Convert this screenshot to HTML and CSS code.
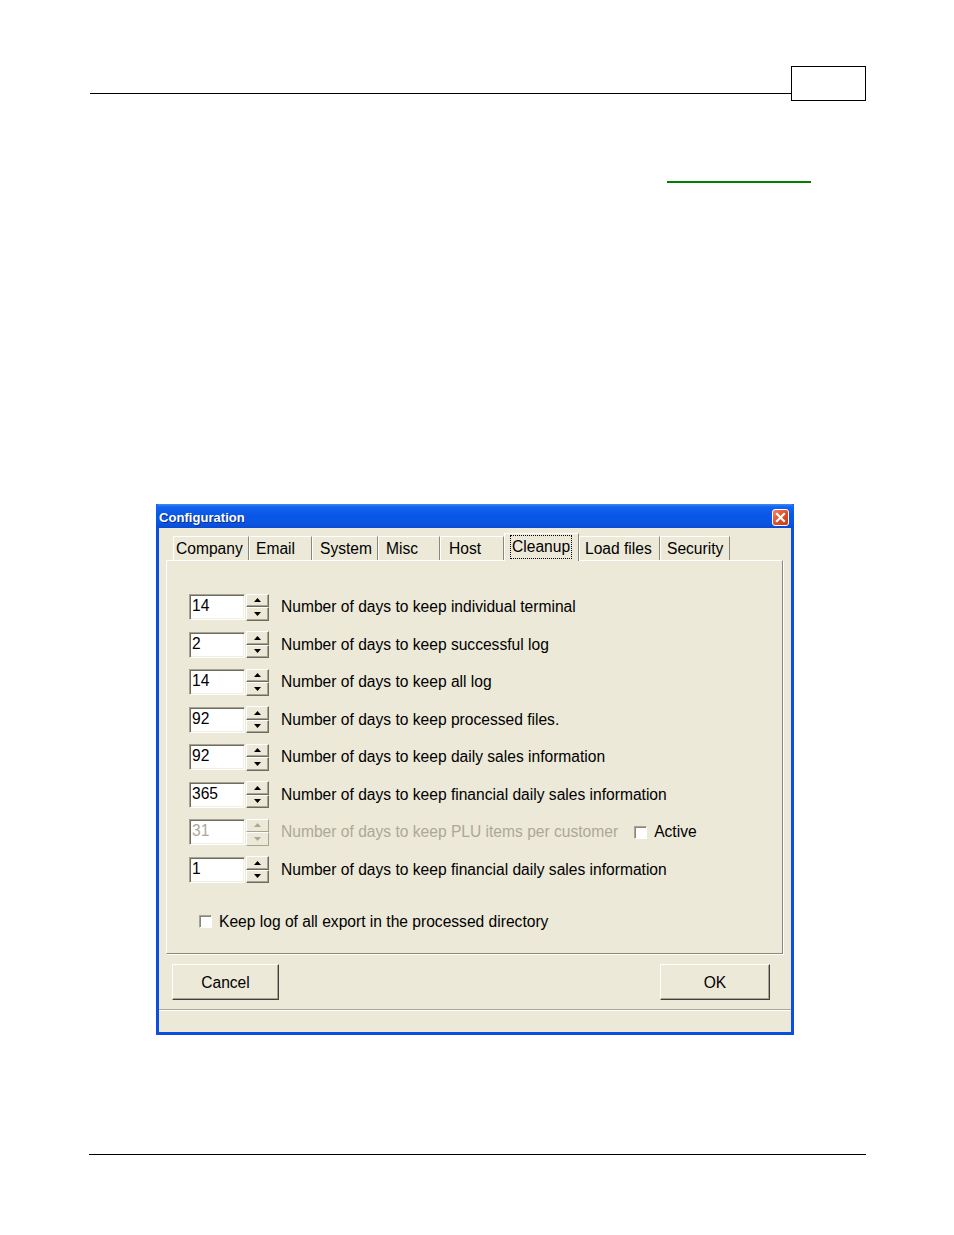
FILE: index.html
```html
<!DOCTYPE html>
<html>
<head>
<meta charset="utf-8">
<title>Configuration</title>
<link rel="stylesheet" href="styles.css">
</head>
<body>
<div class="page">
  <div class="header">
    <div class="header-line"></div>
    <div class="header-box"></div>
  </div>
  <div class="link-line"></div>

  <div class="dialog">
    <div class="titlebar">
      <span class="title">Configuration</span>
      <svg class="close" width="17" height="17" viewBox="0 0 17 17">
        <defs>
          <linearGradient id="cg" x1="0" y1="0" x2="1" y2="1">
            <stop offset="0" stop-color="#F08A6C"/>
            <stop offset="0.5" stop-color="#E0502C"/>
            <stop offset="1" stop-color="#C03A14"/>
          </linearGradient>
        </defs>
        <rect x="0.5" y="0.5" width="16" height="16" rx="2.5" fill="url(#cg)" stroke="#fff"/>
        <path d="M5 5 L12 12 M12 5 L5 12" stroke="#fff" stroke-width="2.2" stroke-linecap="square"/>
      </svg>
    </div>
    <div class="body">
      <div class="tabs">
        <div class="tab t-company">Company</div>
        <div class="tab t-email">Email</div>
        <div class="tab t-system">System</div>
        <div class="tab t-misc">Misc</div>
        <div class="tab t-host">Host</div>
        <div class="tab tab-active t-cleanup"><span class="focus">Cleanup</span></div>
        <div class="tab t-load">Load files</div>
        <div class="tab t-security">Security</div>
      </div>
      <div class="panel">
        <div class="rows">
          <div class="row">
            <div class="field">14</div>
            <div class="spin"><div class="spin-btn"><svg width="7" height="4" viewBox="0 0 7 4"><path d="M3.5 0 L7 4 L0 4 Z"/></svg></div><div class="spin-btn"><svg width="7" height="4" viewBox="0 0 7 4"><path d="M0 0 L7 0 L3.5 4 Z"/></svg></div></div>
            <span class="label">Number of days to keep individual terminal</span>
          </div>
          <div class="row">
            <div class="field">2</div>
            <div class="spin"><div class="spin-btn"><svg width="7" height="4" viewBox="0 0 7 4"><path d="M3.5 0 L7 4 L0 4 Z"/></svg></div><div class="spin-btn"><svg width="7" height="4" viewBox="0 0 7 4"><path d="M0 0 L7 0 L3.5 4 Z"/></svg></div></div>
            <span class="label">Number of days to keep successful log</span>
          </div>
          <div class="row">
            <div class="field">14</div>
            <div class="spin"><div class="spin-btn"><svg width="7" height="4" viewBox="0 0 7 4"><path d="M3.5 0 L7 4 L0 4 Z"/></svg></div><div class="spin-btn"><svg width="7" height="4" viewBox="0 0 7 4"><path d="M0 0 L7 0 L3.5 4 Z"/></svg></div></div>
            <span class="label">Number of days to keep all log</span>
          </div>
          <div class="row">
            <div class="field">92</div>
            <div class="spin"><div class="spin-btn"><svg width="7" height="4" viewBox="0 0 7 4"><path d="M3.5 0 L7 4 L0 4 Z"/></svg></div><div class="spin-btn"><svg width="7" height="4" viewBox="0 0 7 4"><path d="M0 0 L7 0 L3.5 4 Z"/></svg></div></div>
            <span class="label">Number of days to keep processed files.</span>
          </div>
          <div class="row">
            <div class="field">92</div>
            <div class="spin"><div class="spin-btn"><svg width="7" height="4" viewBox="0 0 7 4"><path d="M3.5 0 L7 4 L0 4 Z"/></svg></div><div class="spin-btn"><svg width="7" height="4" viewBox="0 0 7 4"><path d="M0 0 L7 0 L3.5 4 Z"/></svg></div></div>
            <span class="label">Number of days to keep daily sales information</span>
          </div>
          <div class="row">
            <div class="field">365</div>
            <div class="spin"><div class="spin-btn"><svg width="7" height="4" viewBox="0 0 7 4"><path d="M3.5 0 L7 4 L0 4 Z"/></svg></div><div class="spin-btn"><svg width="7" height="4" viewBox="0 0 7 4"><path d="M0 0 L7 0 L3.5 4 Z"/></svg></div></div>
            <span class="label">Number of days to keep financial daily sales information</span>
          </div>
          <div class="row row-disabled">
            <div class="field">31</div>
            <div class="spin"><div class="spin-btn"><svg width="7" height="4" viewBox="0 0 7 4"><path d="M3.5 0 L7 4 L0 4 Z"/></svg></div><div class="spin-btn"><svg width="7" height="4" viewBox="0 0 7 4"><path d="M0 0 L7 0 L3.5 4 Z"/></svg></div></div>
            <span class="label">Number of days to keep PLU items per customer</span>
            <span class="inline-check"><span class="check"></span><span class="check-label">Active</span></span>
          </div>
          <div class="row">
            <div class="field">1</div>
            <div class="spin"><div class="spin-btn"><svg width="7" height="4" viewBox="0 0 7 4"><path d="M3.5 0 L7 4 L0 4 Z"/></svg></div><div class="spin-btn"><svg width="7" height="4" viewBox="0 0 7 4"><path d="M0 0 L7 0 L3.5 4 Z"/></svg></div></div>
            <span class="label">Number of days to keep financial daily sales information</span>
          </div>
        </div>
        <div class="keep-log">
          <span class="check"></span><span class="check-label">Keep log of all export in the processed directory</span>
        </div>
      </div>
      <div class="footer">
        <div class="btn btn-cancel">Cancel</div>
        <div class="btn btn-ok">OK</div>
      </div>
      <div class="status"></div>
    </div>
  </div>

  <div class="footer-line"></div>
</div>
</body>
</html>
```
FILE: styles.css
```css
html, body {
  margin: 0;
  padding: 0;
  background: #fff;
}
body {
  font-family: "Liberation Sans", Arial, sans-serif;
  color: #000;
}
.page {
  width: 954px;
  padding-top: 66px;
}
.header {
  display: flex;
  margin-left: 90px;
  width: 776px;
}
.header-line {
  flex: 1;
  height: 27px;
  border-bottom: 1px solid #000;
}
.header-box {
  width: 75px;
  height: 35px;
  box-sizing: border-box;
  border: 1px solid #000;
}
.link-line {
  margin: 80px 0 0 667px;
  width: 144px;
  height: 2px;
  background: #008000;
}
.footer-line {
  margin: 119px 0 0 89px;
  width: 777px;
  height: 1px;
  background: #000;
}

/* dialog */
.dialog {
  margin: 321px 0 0 156px;
  width: 638px;
  box-sizing: border-box;
  background: #0B4FE0;
  padding: 0 3px 3px;
}
.titlebar {
  height: 24px;
  margin: 0 -3px;
  padding: 0 5px 0 3px;
  display: flex;
  align-items: center;
  justify-content: space-between;
  background: linear-gradient(to bottom, #3D8BF8 0%, #1563EE 12%, #0957E8 45%, #0A55E2 80%, #0A4AD2 100%);
  border-radius: 3px 3px 0 0;
}
.title {
  color: #fff;
  font-weight: bold;
  font-size: 13px;
  padding-top: 3px;
  letter-spacing: 0.05px;
  text-shadow: 1px 1px 0 #0A2E8C;
}
.close {
  display: block;
  margin-top: 2px;
}
.body {
  background: #ECE9D8;
  padding: 5px 8px 0 7px;
}

/* tabs */
.tabs {
  display: flex;
  align-items: flex-end;
  height: 27px;
  padding-left: 7px;
  position: relative;
  z-index: 1;
}
.tab {
  height: 24px;
  box-sizing: border-box;
  border-top: 1px solid #fff;
  border-left: 1px solid #fff;
  border-right: 1px solid #8A877A;
  padding-left: 6px;
  padding-top: 1px;
  font-size: 15.6px;
  line-height: 22px;
  white-space: nowrap;
  background: #ECE9D8;
}
.tab-active {
  height: 28px;
  margin-bottom: -1px;
  line-height: 24px;
  padding-top: 1px;
}
.focus {
  display: inline-block;
  outline: 1px dotted #000;
  outline-offset: 0;
  line-height: 22px;
  padding: 0 1px;
}
.t-company { width: 76px; padding-left: 2px; }
.t-email { width: 63px; padding-left: 6px; }
.t-system { width: 66px; padding-left: 7px; }
.t-misc { width: 62px; padding-left: 7px; }
.t-host { width: 64px; padding-left: 8px; }
.t-cleanup { width: 75px; padding-left: 6px; }
.t-load { width: 81px; padding-left: 5px; }
.t-security { width: 70px; padding-left: 6px; }

/* panel */
.panel {
  height: 394px;
  box-sizing: border-box;
  border-top: 1px solid #fff;
  border-left: 1px solid #fff;
  border-right: 1px solid #8A877A;
  border-bottom: 1px solid #8A877A;
  box-shadow: 1px 1px 0 #fff;
  padding: 33px 0 0 22px;
}
.rows {
  display: flex;
  flex-direction: column;
  gap: 11.5px;
}
.row {
  display: flex;
  align-items: center;
  height: 26px;
  font-size: 15.6px;
  line-height: 28px;
}
.field {
  width: 56px;
  height: 26px;
  box-sizing: border-box;
  border: 1px solid;
  border-color: #A7A493 #fff #fff #A7A493;
  box-shadow: inset 1px 1px 0 #6E6C60, inset -1px -1px 0 #F1EFE2;
  background: #fff;
  padding-left: 2px;
  line-height: 22px;
}
.spin {
  margin-left: 1px;
  width: 23px;
  height: 27px;
  display: flex;
  flex-direction: column;
}
.spin-btn {
  flex: 1;
  box-sizing: border-box;
  border: 1px solid;
  border-color: #fff #6E6C60 #6E6C60 #fff;
  box-shadow: inset -1px -1px 0 #A7A493;
  display: flex;
  align-items: center;
  justify-content: center;
  background: #ECE9D8;
}
.spin-btn svg {
  display: block;
  fill: #000;
}
.label {
  margin-left: 12px;
  white-space: nowrap;
}
.row-disabled .field,
.row-disabled .label {
  color: #ACA899;
}
.row-disabled .spin-btn svg {
  fill: #ACA899;
}
.row-disabled .spin-btn {
  border-color: #fff #A7A493 #A7A493 #fff;
  box-shadow: none;
}
.inline-check {
  display: flex;
  align-items: center;
  margin-left: 16px;
}
.check {
  width: 13px;
  height: 13px;
  box-sizing: border-box;
  border: 1px solid;
  border-color: #A7A493 #fff #fff #A7A493;
  box-shadow: inset 1px 1px 0 #8A877A;
  background: #fff;
  flex: none;
}
.check-label {
  margin-left: 7px;
  white-space: nowrap;
}
.keep-log {
  display: flex;
  align-items: center;
  margin: 32px 0 0 10px;
  height: 13px;
  font-size: 15.6px;
  line-height: 15px;
}

/* footer */
.footer {
  display: flex;
  justify-content: space-between;
  padding: 10px 13px 0 6px;
}
.btn {
  height: 36px;
  box-sizing: border-box;
  border: 1px solid;
  border-color: #fff #404040 #404040 #fff;
  box-shadow: inset -1px -1px 0 #A7A493;
  background: #ECE9D8;
  display: flex;
  align-items: center;
  justify-content: center;
  font-size: 15.6px;
  padding-top: 2px;
}
.btn-cancel { width: 107px; }
.btn-ok { width: 110px; }
.status {
  margin: 9px -8px 0 -7px;
  height: 22px;
  border-top: 1px solid #ACA899;
  box-shadow: inset 0 1px 0 #fff;
}
```
